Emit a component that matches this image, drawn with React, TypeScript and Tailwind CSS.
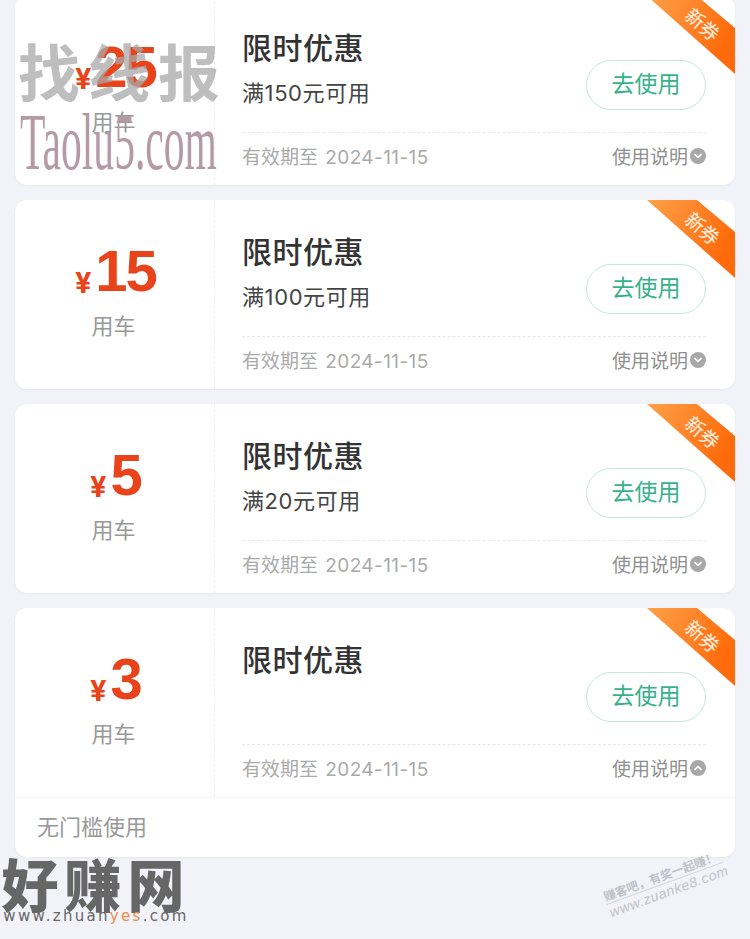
import { ChevronDown, ChevronUp } from 'lucide-react';

const cjk = '[font-family:"Noto_Sans_CJK_SC","Noto_Sans",sans-serif]';

interface Coupon {
  amount: string;
  limit: string;
  open?: boolean;
}

const coupons: Coupon[] = [
  { amount: '25', limit: '满150元可用' },
  { amount: '15', limit: '满100元可用' },
  { amount: '5', limit: '满20元可用' },
  { amount: '3', limit: '', open: true },
];

function Ribbon() {
  return (
    <div className="absolute top-0 right-0 w-[88px] h-[78px] overflow-hidden rounded-tr-xl">
      <svg width="88" height="78" viewBox="0 0 88 78" className="absolute top-0 left-0">
        <defs>
          <linearGradient id="ribbon" x1="0" y1="0" x2="1" y2="0.4">
            <stop offset="0" stopColor="#ffa149" />
            <stop offset="1" stopColor="#ff6a0a" />
          </linearGradient>
        </defs>
        <polygon points="0,0 50,0 88,32 88,78" fill="url(#ribbon)" />
      </svg>
      <span className="absolute top-[14px] left-[36px] w-[40px] text-center text-[19px] leading-[28px] text-[#fff3e6] whitespace-nowrap rotate-[41deg]">
        新券
      </span>
    </div>
  );
}

function CouponCard({ coupon }: { coupon: Coupon }) {
  const Arrow = coupon.open ? ChevronUp : ChevronDown;
  return (
    <div className="relative flex h-[189px] shrink-0">
      <div className="w-[200px] shrink-0 border-r border-dashed border-[#eeeeee] flex flex-col items-center pt-[35px]">
        <div className="flex items-baseline gap-[4px] h-[72px] pl-[2px] text-[#e8431a]">
          <span className="text-[30px] leading-[72px] font-bold translate-y-[2px] [font-family:Roboto,sans-serif]">¥</span>
          <span className="text-[58px] leading-[72px] font-bold tracking-[-2px] [font-family:'Liberation_Sans',sans-serif]">{coupon.amount}</span>
        </div>
        <span className="text-[22px] leading-[32px] text-[#999999] mt-[1px] pr-[2px]">用车</span>
      </div>
      <div className="flex-1 pl-[27px] pr-[29px] flex flex-col">
        <div className="h-[137px] border-b border-dashed border-[#e8e8e8] flex justify-between">
          <div className="pt-[29px]">
            <div className="text-[30px] leading-[42px] tracking-[0.5px] font-medium text-[#333333]">限时优惠</div>
            <div className="text-[22px] leading-[32px] tracking-[0.6px] text-[#444444] mt-[10px] [font-family:Inter,'Noto_Sans_CJK_SC',sans-serif]">
              {coupon.limit}
            </div>
          </div>
          <button className="mt-[64px] w-[120px] h-[50px] rounded-full border border-[#c5e6da] text-[23px] text-[#36b28a] flex items-center justify-center pb-[5px]">
            去使用
          </button>
        </div>
        <div className="flex-1 flex justify-between items-start pt-[8px] text-[19px] leading-[30px] text-[#aaaaaa]">
          <span>
            有效期至 <span className="[font-family:Inter,sans-serif] text-[19px] tracking-[0.4px] ml-[3px]">2024-11-15</span>
          </span>
          <span className="flex items-center text-[#8f8f8f]">
            使用说明
            <span className="ml-[2px] w-4 h-4 rounded-full bg-[#a8a8a8] flex items-center justify-center">
              <Arrow size={12} strokeWidth={3.5} color="#ffffff" />
            </span>
          </span>
        </div>
      </div>
      <Ribbon />
    </div>
  );
}

export default function App() {
  return (
    <div className={`relative w-[750px] h-[939px] overflow-hidden bg-[#f2f3f8] ${cjk}`}>
      <div className="-mt-1 px-[15px] flex flex-col gap-[15px]">
        {coupons.map((coupon) => (
          <div key={coupon.amount} className="bg-white rounded-xl shadow-[0_1px_3px_rgba(0,0,0,0.05)] overflow-hidden">
            <CouponCard coupon={coupon} />
            {coupon.open && (
              <div className="h-[60px] border-t border-[#f6f6f6] pl-[22px] pb-1 flex items-center text-[22px] text-[#999999]">
                无门槛使用
              </div>
            )}
          </div>
        ))}
      </div>

      {/* top-left watermark */}
      <div className="absolute top-[35px] left-[18px] text-[62px] leading-[70px] font-bold text-[#a8a8a8]/75 tracking-[8px] whitespace-nowrap">
        找线报
      </div>
      <div className="absolute top-[104px] left-[20px] text-[80px] leading-[76px] text-[#b59aa5] [font-family:'Liberation_Serif',serif] origin-left scale-x-[0.52] whitespace-nowrap">
        Taolu5.com
      </div>

      {/* bottom-left logo */}
      <div className="absolute top-[858px] left-[3px] w-[186px] flex flex-col items-center">
        <div className="text-[57px] leading-[49px] font-black text-[#666666] tracking-[6px] whitespace-nowrap">好赚网</div>
        <div className="text-[15px] leading-[18px] tracking-[2.3px] text-[#666666] [font-family:'DejaVu_Sans',sans-serif] whitespace-nowrap">
          www.zhuan<span className="text-[#e98a4f]">yes</span>.com
        </div>
      </div>

      {/* bottom-right watermark */}
      <div className="absolute top-[888px] left-[607px] w-[124px] origin-left rotate-[-20deg] text-[#bfc2ca] whitespace-nowrap">
        <div className="text-[12px] leading-[16px] font-bold border-b border-[#d0d3da]">赚客吧，有奖一起赚！</div>
        <div className="text-[14px] leading-[17px] italic [font-family:'Liberation_Sans',sans-serif] tracking-[0.6px]">www.zuanke8.com</div>
      </div>
    </div>
  );
}
